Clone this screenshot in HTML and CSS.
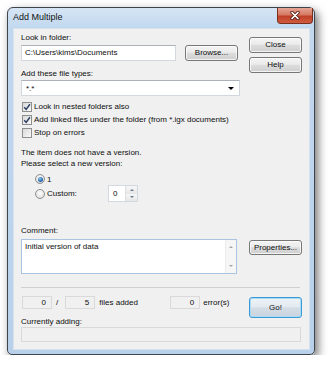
FILE: index.html
```html
<!DOCTYPE html>
<html lang="en">

<head>
    <meta charset="UTF-8">
    <meta name="viewport" content="width=device-width, initial-scale=1.0">
    <title>Add Multiple</title>
    <link rel="stylesheet" href="styles.css">
</head>

<body>
    <div class="window">
        <div class="titlebar">
            <span class="title">Add Multiple</span>
            <div class="close-x">
                <svg width="12" height="9" viewBox="0 0 12 9">
                    <path d="M3 1.5 L9 7.5 M9 1.5 L3 7.5" stroke="#5a2017" stroke-width="3.4" stroke-linecap="round" fill="none" />
                    <path d="M3 1.5 L9 7.5 M9 1.5 L3 7.5" stroke="#fff" stroke-width="1.7" stroke-linecap="round" fill="none" />
                </svg>
            </div>
        </div>

        <div class="client">
            <div class="top">
                <div class="main">
                    <p class="lbl">Look in folder:</p>
                    <div class="folder-row">
                        <div class="textbox folder">C:\Users\kims\Documents</div>
                        <button class="btn browse">Browse...</button>
                    </div>

                    <p class="lbl types-lbl">Add these file types:</p>
                    <div class="combo">
                        <span>*.*</span>
                        <span class="combo-arrow"></span>
                    </div>

                    <div class="checks">
                        <div class="check-row">
                            <span class="checkbox"><svg width="8" height="8" viewBox="0 0 8 8"><path d="M1.2 4.2 L3.2 6.4 L6.9 1.3" stroke="#2e3f63" stroke-width="1.5" fill="none" /></svg></span>
                            Look in nested folders also
                        </div>
                        <div class="check-row">
                            <span class="checkbox"><svg width="8" height="8" viewBox="0 0 8 8"><path d="M1.2 4.2 L3.2 6.4 L6.9 1.3" stroke="#2e3f63" stroke-width="1.5" fill="none" /></svg></span>
                            Add linked files under the folder (from *.igx documents)
                        </div>
                        <div class="check-row">
                            <span class="checkbox"></span>
                            Stop on errors
                        </div>
                    </div>

                    <p class="note first">The item does not have a version.</p>
                    <p class="note">Please select a new version:</p>

                    <div class="radios">
                        <div class="radio-row">
                            <span class="radio checked"></span>
                            <span>1</span>
                        </div>
                        <div class="radio-row custom">
                            <span class="radio"></span>
                            <span class="radio-text">Custom:</span>
                            <div class="spin">
                                <div class="spin-value">0</div>
                                <div class="spin-btns">
                                    <span class="spin-up"></span>
                                    <span class="spin-down"></span>
                                </div>
                            </div>
                        </div>
                    </div>
                </div>

                <div class="side">
                    <button class="btn">Close</button>
                    <button class="btn">Help</button>
                </div>
            </div>

            <p class="lbl comment-lbl">Comment:</p>
            <div class="comment-row">
                <div class="memo">
                    <div class="memo-text">Initial version of data</div>
                    <div class="vscroll">
                        <span class="sc-up"></span>
                        <span class="sc-down"></span>
                    </div>
                </div>
                <button class="btn props">Properties...</button>
            </div>

            <div class="separator"></div>

            <div class="status">
                <div class="counters">
                    <div class="count first">0</div>
                    <span class="slash">/</span>
                    <div class="count">5</div>
                    <span class="files-lbl">files added</span>
                    <div class="count">0</div>
                    <span class="errors-lbl">error(s)</span>
                </div>
                <button class="btn go">Go!</button>
                <p class="lbl adding-lbl">Currently adding:</p>
            </div>
            <div class="progress-box"></div>
        </div>
    </div>
</body>

</html>
```

FILE: styles.css
```css
* {
    box-sizing: border-box;
    margin: 0;
    padding: 0;
}

body {
    background: #fff;
    font-family: "Liberation Sans", Arial, sans-serif;
    font-size: 8px;
    color: #0e0e0e;
}

.window {
    width: 308px;
    height: 348px;
    margin: 7px 0 0 7px;
    border: 1px solid #3e444c;
    border-radius: 6px 6px 5px 5px;
    background: linear-gradient(180deg, #d6e5f5 0px, #c1d8ef 20px, #b8d0ea 100%);
    box-shadow: 3px 4px 10px rgba(0, 0, 0, 0.55);
    display: flex;
    flex-direction: column;
}

.titlebar {
    height: 20px;
    flex-shrink: 0;
    display: flex;
    align-items: flex-start;
    padding-left: 5px;
}

.title {
    font-size: 9px;
    line-height: 19px;
    color: #111;
}

.close-x {
    margin-left: auto;
    margin-right: 1px;
    width: 36px;
    height: 16px;
    border: 1px solid #79301f;
    border-top: none;
    border-radius: 0 0 4px 4px;
    background: linear-gradient(#e7a696, #d57a63 45%, #c14128 55%, #cf5b3f 100%);
    display: flex;
    align-items: center;
    justify-content: center;
}

.client {
    flex: 1;
    margin: 0 4px 4px 5px;
    background: #f0f0f0;
    border: 1px solid #d8e3ee;
    padding: 4px 7px 0 7px;
}

.top {
    display: flex;
    gap: 9px;
}

.main {
    width: 219px;
}

.side {
    width: 53px;
    padding-top: 4px;
    display: flex;
    flex-direction: column;
    gap: 4px;
}

.lbl {
    line-height: 10px;
}

.folder-row {
    display: flex;
    justify-content: space-between;
    width: 217px;
    margin-top: 2px;
}

.textbox {
    height: 16px;
    background: #fff;
    border: 1px solid #d3d8df;
    border-top-color: #adb2ba;
    padding: 0 3px;
    line-height: 14px;
}

.folder {
    width: 155px;
}

.btn {
    width: 53px;
    height: 16px;
    border: 1px solid #777;
    border-radius: 3px;
    background: linear-gradient(#f4f4f4, #ebebeb 45%, #dcdcdc 52%, #cfcfcf);
    box-shadow: inset 0 0 0 1px rgba(255, 255, 255, 0.75);
    font: inherit;
    color: #0e0e0e;
    text-align: center;
    line-height: 14px;
}

.types-lbl {
    margin-top: 8px;
}

.combo {
    margin-top: 1px;
    height: 16px;
    background: #fff;
    border: 1px solid #d3d8df;
    border-top-color: #adb2ba;
    display: flex;
    justify-content: space-between;
    align-items: center;
    padding: 0 5px 0 4px;
}

.combo-arrow {
    border-left: 3px solid transparent;
    border-right: 3px solid transparent;
    border-top: 3px solid #000;
}

.checks {
    margin-top: 4px;
}

.check-row {
    height: 13px;
    display: flex;
    align-items: center;
}

.checkbox {
    width: 10px;
    height: 10px;
    margin: 0 2px 0 1px;
    border: 1px solid #8e8f8f;
    background: linear-gradient(135deg, #d8d8d8, #fafafa);
    display: flex;
    align-items: center;
    justify-content: center;
}

.note {
    line-height: 11px;
}

.note.first {
    margin-top: 8px;
}

.radios {
    margin-top: 4px;
    padding-left: 14px;
}

.radio-row {
    height: 12px;
    display: flex;
    align-items: center;
}

.radio-row.custom {
    height: 17px;
}

.radio {
    width: 10px;
    height: 10px;
    margin-right: 2px;
    border-radius: 50%;
    border: 1px solid #8e8f8f;
    background: radial-gradient(circle at 50% 40%, #fff, #d6d6d6);
    display: flex;
    align-items: center;
    justify-content: center;
}

.radio.checked::after {
    content: "";
    width: 5px;
    height: 5px;
    border-radius: 50%;
    background: radial-gradient(circle at 40% 35%, #86c8f2, #1b58a3 70%);
}

.radio-text {
    width: 61px;
}

.spin {
    width: 30px;
    height: 17px;
    display: flex;
    background: #fff;
    border: 1px solid #d3d8df;
}

.spin-value {
    flex: 1;
    padding-left: 4px;
    line-height: 15px;
}

.spin-btns {
    width: 12px;
    display: flex;
    flex-direction: column;
    border-left: 1px solid #dedede;
}

.spin-btns span {
    flex: 1;
    display: flex;
    align-items: center;
    justify-content: center;
    background: linear-gradient(#f7f7f7, #e6e6e6);
}

.spin-up::after,
.sc-up::after {
    content: "";
    border-left: 2px solid transparent;
    border-right: 2px solid transparent;
    border-bottom: 2px solid #6d7a8c;
}

.spin-down::after,
.sc-down::after {
    content: "";
    border-left: 2px solid transparent;
    border-right: 2px solid transparent;
    border-top: 2px solid #6d7a8c;
}

.comment-lbl {
    margin-top: 24px;
}

.comment-row {
    margin-top: 3px;
    display: flex;
    justify-content: space-between;
    align-items: flex-start;
}

.memo {
    width: 216px;
    height: 35px;
    display: flex;
    background: #fff;
    border: 1px solid #aac4df;
}

.memo-text {
    flex: 1;
    padding: 1px 3px;
    line-height: 11px;
}

.vscroll {
    width: 11px;
    display: flex;
    flex-direction: column;
    justify-content: space-between;
    background: #f6f6f6;
    border-left: 1px solid #ececec;
}

.vscroll span {
    height: 14px;
    display: flex;
    align-items: center;
    justify-content: center;
}

.sc-up::after {
    border-bottom-color: #a3a3a3;
}

.sc-down::after {
    border-top-color: #a3a3a3;
}

.props {
    margin-top: 1px;
    height: 15px;
    line-height: 13px;
}

.separator {
    width: 279px;
    height: 1px;
    margin-top: 13px;
    background: #d0d0d0;
}

.status {
    margin-top: 8px;
    display: grid;
    grid-template-columns: 1fr 53px;
}

.counters {
    display: flex;
    align-items: center;
    height: 13px;
}

.count {
    width: 30px;
    height: 13px;
    padding-right: 5px;
    text-align: right;
    line-height: 11px;
    border: 1px solid #d9d9d9;
}

.count.first {
    margin-left: 1px;
}

.slash {
    margin: 0 7px 0 4px;
}

.files-lbl {
    width: 75px;
    padding-left: 4px;
}

.errors-lbl {
    margin-left: 3px;
}

.go {
    grid-column: 2;
    grid-row: 1 / span 2;
    margin-top: 1px;
    height: 21px;
    line-height: 19px;
    border-color: #3a9ad6;
    background: linear-gradient(#eef3f7, #e3eaf0 45%, #d4dde6 52%, #c9d4de);
    box-shadow: inset 0 0 0 1px #a9dcf4;
}

.adding-lbl {
    grid-column: 1;
    margin-top: 8px;
}

.progress-box {
    width: 280px;
    height: 15px;
    border: 1px solid #d9d9d9;
}
```
